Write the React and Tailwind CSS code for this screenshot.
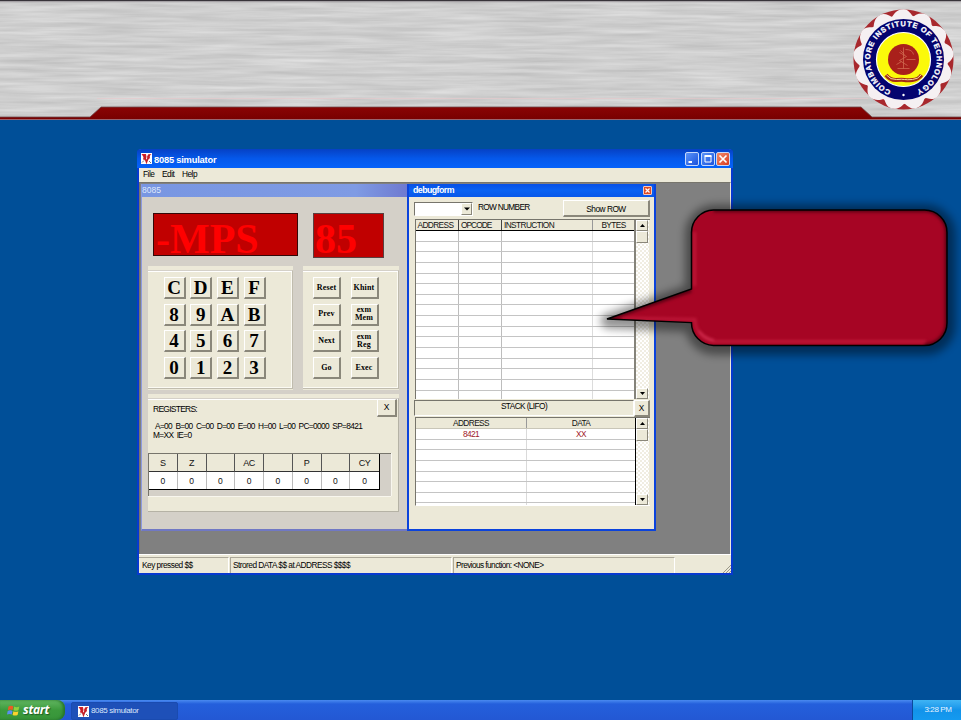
import React from "react";

const raised =
  "bg-[#ece9d8] border border-t-white border-l-white border-r-[#8a877a] border-b-[#8a877a]";

function Seal() {
  const petals = Array.from({ length: 13 }, (_, i) => (i * 360) / 13 - 1);
  return (
    <svg className="absolute left-[852px] top-[8px]" width="103" height="103" viewBox="-51.5 -51.5 103 103">
      <defs>
        <path id="sealArc" d="M -12.5 31 A 33.4 33.4 0 1 1 12.5 31" />
      </defs>
      <circle r="50" fill="#a8282d" />
      {petals.map((a) => (
        <g key={a} transform={`rotate(${a})`}>
          <path d="M-12 -40 C-9 -46 -6 -50.300 1 -50.300 C6 -50 8 -46 12 -40 Z" fill="#f5f0f2" />
        </g>
      ))}
      <circle r="44.5" fill="#f5f0f2" />
      <circle r="40.5" fill="#04046f" />
      <circle r="27" fill="#fbf90a" stroke="#fff" strokeWidth="1.2" />
      <circle cx="0" cy="0" r="15.5" fill="#a9201b" />
      <path
        d="M0 -12 V9 M-4 -7 L3 -3 L-4 1 L4 6 M2 -10 q7 0 8 5 M-6 9 h12 M3 0 h9 M-3 -9 l4 4 M-7 5 l5 -3"
        stroke="#cf6a50"
        strokeWidth="0.8"
        fill="none"
      />
      <path d="M-17.500 15.500 Q-13 21 -7 20.500 T1 20.500 T9 20.500 T18 15.500" stroke="#a22b16" strokeWidth="4" fill="none" />
      <path d="M-17 15.500 Q-13 20.500 -7 20 T1 20 T9 20 T17.500 15.500" stroke="#f3d9a0" strokeWidth="1" fill="none" />
      <text
        fill="#fff"
        stroke="#fff"
        strokeWidth="0.3"
        fontFamily="'Liberation Sans', sans-serif"
        fontWeight="700"
        fontSize="7.4"
      >
        <textPath href="#sealArc" startOffset="0" textLength="183" lengthAdjust="spacing">
          COIMBATORE INSTITUTE OF TECHNOLOGY
        </textPath>
      </text>
      <circle cx="0" cy="35.500" r="1.2" fill="#fff" />
    </svg>
  );
}

function Header() {
  return (
    <header className="relative h-[120px] w-full shrink-0 overflow-hidden">
      <svg className="block" width="961" height="120" viewBox="0 0 961 120">
        <defs>
          <filter id="brushed" x="0" y="0" width="100%" height="100%" colorInterpolationFilters="sRGB">
            <feTurbulence type="fractalNoise" baseFrequency="0.012 0.22" numOctaves="3" seed="7" />
            <feColorMatrix values="0.17 0 0 0 0.725  0.17 0 0 0 0.725  0.17 0 0 0 0.725  0 0 0 0 1" />
          </filter>
          <linearGradient id="redBar" x1="0" y1="0" x2="0" y2="1">
            <stop offset="0" stopColor="#8a0404" />
            <stop offset="1" stopColor="#780000" />
          </linearGradient>
        </defs>
        <rect width="961" height="120" fill="#cfcfcf" />
        <rect width="961" height="120" filter="url(#brushed)" />
        <rect width="961" height="1.300" fill="#38343a" />
        <rect y="1.300" width="961" height="1" fill="#a5a1a5" />
        <path d="M97 98.500 H868" stroke="#e5c9cb" strokeWidth="0.700" />
        <path d="M101 107 H861 L872 117 H961 V119.500 H0 V117 H90 Z" fill="url(#redBar)" />
        <path d="M0 117 H90 L101 107 H861 L872 117 H961" fill="none" stroke="#6d4a4c" strokeWidth="0.800" />
        <path d="M0 119.500 H961" stroke="#97646f" strokeWidth="1" />
      </svg>
      <Seal />
    </header>
  );
}

function AppIcon() {
  return (
    <svg width="11" height="11" viewBox="0 0 11 11" className="shrink-0">
      <rect width="11" height="11" fill="#fff" />
      <path d="M0.500 1 H5 L5.500 4 L4.500 7 L2 6.500 L2.500 4 Z M10.500 1 L7 1.500 L6 4 L7.500 6.500 L9 5 L8.500 3 Z" fill="#d6202a" />
      <path d="M3 2 L5.500 9 L8.500 1.500" fill="none" stroke="#c22028" strokeWidth="1.600" />
      <path d="M1 9.500 L3 7.500 M8 8 L10 10" stroke="#555" strokeWidth="0.800" />
    </svg>
  );
}

function Caption({ kind }) {
  const tone =
    kind === "close"
      ? "bg-linear-to-br from-[#f08a6a] to-[#d8371a]"
      : "bg-linear-to-br from-[#5b93f8] to-[#1c51dc]";
  return (
    <span className={`block h-[14px] w-[14px] rounded-[2px] border border-[#c5d8fb] ${tone}`}>
      <svg width="12" height="12" viewBox="0 0 12 12" fill="none" stroke="#fff">
        {kind === "min" && <path d="M2.500 9 H6" strokeWidth="2" />}
        {kind === "max" && (
          <>
            <path d="M3 3.500 V9 H9 V3" strokeWidth="1" />
            <path d="M2.500 3 H9.500" strokeWidth="2" />
          </>
        )}
        {kind === "close" && <path d="M2.500 2.500 L9.500 9.500 M9.500 2.500 L2.500 9.500" strokeWidth="1.700" />}
      </svg>
    </span>
  );
}

const keys = ["C", "D", "E", "F", "8", "9", "A", "B", "4", "5", "6", "7", "0", "1", "2", "3"];
const fns = [
  ["Reset"], ["Khint"],
  ["Prev"], ["exm", "Mem"],
  ["Next"], ["exm", "Reg"],
  ["Go"], ["Exec"],
];

function KitForm() {
  return (
    <section className="absolute left-px top-px flex h-[347px] w-[268px] flex-col border-b-2 border-l border-[#7078c4] border-l-[#8d9ae0] bg-[#d4d0c8]">
      <div className="h-[13px] shrink-0 bg-linear-to-r from-[#7896e2] from-0% via-[#7f9be4] via-80% to-[#6e78cf] text-[8.5px] leading-[13px] text-[#dfe8fb]">
        8085
      </div>
      <div className="flex h-[69px] shrink-0 items-start pl-[11px] pt-[16px] font-['Liberation_Serif',serif] text-[42px] font-bold text-[#ff0000]">
        <div className="h-[43px] w-[145px] border border-[#330808] bg-[#c00000] pl-[2px] leading-[50px]">-MPS</div>
        <div className="ml-[15px] h-[45px] w-[71px] border border-[#5a4040] bg-[#c00000] pl-[1px] leading-[50px]">85</div>
      </div>
      <div className="flex h-[124px] shrink-0 pl-[6px]">
        <div className="h-[124px] w-[145px] bg-[#ece9d8] pt-[4px]">
          <div className="grid h-[119px] grid-cols-[repeat(4,22px)] grid-rows-[repeat(4,22px)] gap-[4.7px] border-b border-r border-t border-[#c0bcae] border-t-[#d4d0c8] pl-[15.5px] pt-[6px] shadow-[inset_0_1px_0_#fff,inset_-1px_-1px_0_#fbfaf3]">
            {keys.map((k) => (
              <div key={k} className={`${raised} flex items-center justify-center border-b-2 border-r-2 font-['Liberation_Serif',serif] text-[19px] font-bold leading-none text-black`}>
                {k}
              </div>
            ))}
          </div>
        </div>
        <div className="ml-[10px] h-[124px] w-[96px] bg-[#ece9d8] pt-[4px]">
          <div className="grid h-[119px] grid-cols-[repeat(2,28px)] grid-rows-[repeat(4,22px)] gap-x-[9.5px] gap-y-[4.7px] border-b border-r border-t border-[#c0bcae] border-t-[#d4d0c8] pl-[10px] pt-[6px] shadow-[inset_0_1px_0_#fff,inset_-1px_-1px_0_#fbfaf3]">
            {fns.map((f, i) => (
              <div key={i} className={`${raised} flex flex-col items-center justify-center border-b-2 border-r-2 font-['Liberation_Serif',serif] text-[8px] font-bold leading-[8px] tracking-[0.15px] text-black`}>
                {f.map((w) => (
                  <span key={w}>{w}</span>
                ))}
              </div>
            ))}
          </div>
        </div>
      </div>
      <div className="ml-[6px] mt-[4px] h-[118px] w-[251px] shrink-0 bg-[#ece9d8] pt-[4px]">
        <div className="flex h-[114px] flex-col border-b border-r border-t border-[#b5b2a5] border-t-[#d4d0c8] shadow-[inset_0_1px_0_#fff]">
          <div className="flex justify-between">
            <span className="pl-[5px] pt-[5px] text-[8.5px] leading-[10px] tracking-[-0.75px] text-black">REGISTERS:</span>
            <span className={`${raised} mr-px h-[18px] w-[20px] border-b-2 border-r-2 text-center text-[8.5px] leading-[15px] text-black`}>X</span>
          </div>
          <div className="mt-[5px] whitespace-pre pl-[5px] text-[8.3px] leading-[8.5px] text-black">
            <div className="ml-[2px] tracking-[-0.63px]">A=00  B=00  C=00  D=00  E=00  H=00  L=00  PC=0000  SP=8421</div>
            <div className="tracking-[-0.63px]">M=XX  IE=0</div>
          </div>
          <div className="mt-[14px] h-[43px] w-[243px] border-l border-t border-[#77756c] bg-[#d4d0c8] shadow-[0_1px_0_#f8f6ee,1px_0_0_#f8f6ee]">
            <div className="grid h-[36px] w-[231px] grid-cols-8 grid-rows-2 border-b border-r border-black text-center text-[9px] leading-[18px] text-[#111]">
              {["S", "Z", "", "AC", "", "P", "", "CY"].map((h, i) => (
                <div key={i} className={`border-b border-b-[#333] bg-[#ece9d8] tracking-[-0.3px] ${i < 7 ? "border-r border-r-[#555]" : ""}`}>{h}</div>
              ))}
              {Array.from({ length: 8 }, (_, i) => (
                <div key={i} className={`bg-white text-[8.5px] ${i < 7 ? "border-r border-r-[#bbb]" : ""}`}>0</div>
              ))}
            </div>
          </div>
        </div>
      </div>
    </section>
  );
}

function Arrow({ up }) {
  return (
    <span className={`${raised} flex h-[11px] w-[12px] shrink-0 items-center justify-center`}>
      <svg width="5" height="3" viewBox="0 0 5 3">
        <path d={up ? "M0 3 L2.500 0 L5 3 Z" : "M0 0 L2.500 3 L5 0 Z"} fill="#000" />
      </svg>
    </span>
  );
}

function ScrollBar() {
  return (
    <div className="flex w-[13px] shrink-0 flex-col bg-[repeating-conic-gradient(#f0ede2_0_25%,#ffffff_0_50%)] bg-[length:4px_4px]">
      <Arrow up />
      <span className={`${raised} h-[12px] w-[12px]`} />
      <span className="flex-1" />
      <Arrow />
    </div>
  );
}

function DebugForm() {
  return (
    <section className="absolute left-[267px] top-px flex h-[347px] w-[249px] flex-col border-b-[2px] border-l-[2px] border-r-[2px] border-[#0b43dc] bg-[#ece9d8]">
      <div className="flex h-[13px] shrink-0 items-center justify-between bg-linear-to-b from-[#0850e6] via-[#0a62f2] to-[#0858ea] pl-[4px] pr-[2px]">
        <span className="text-[8.8px] font-bold leading-[13px] tracking-[-0.56px] text-white">debugform</span>
        <span className="flex h-[9px] w-[9px] items-center justify-center rounded-[1px] border border-[#f6c8ba] bg-[#dd4a26]">
          <svg width="5" height="5" viewBox="0 0 5 5">
            <path d="M0.500 0.500 L4.500 4.500 M4.500 0.500 L0.500 4.500" stroke="#fff" strokeWidth="1.200" />
          </svg>
        </span>
      </div>
      <div className="flex h-[22px] shrink-0 items-start pl-[5px] pt-[3px] text-[8.5px] text-black">
        <div className="mt-[2px] flex h-[14px] w-[59px] justify-end border border-[#fff] border-l-[#77756c] border-t-[#77756c] bg-white">
          <span className={`${raised} flex h-[12px] w-[11px] items-center justify-center`}>
            <svg width="6" height="4" viewBox="0 0 6 4">
              <path d="M0 0.500 H6 L3 3.500 Z" fill="#000" />
            </svg>
          </span>
        </div>
        <span className="ml-[5px] mt-[2px] w-[85px] text-[8.300px] leading-[10px] tracking-[-0.7px]">ROW NUMBER</span>
        <div className={`${raised} h-[17px] w-[87px] border-b-2 border-r-2 text-center text-[8.3px] leading-[16px] tracking-[-0.5px]`}>Show ROW</div>
      </div>
      <div className="ml-[6px] flex h-[180px] w-[235px] shrink-0 border-l border-t border-[#77756c]">
        <div className="w-[220px] shrink-0 overflow-hidden border-r-2 border-[#85837a] bg-white">
          <div className="grid h-[11px] grid-cols-[43px_43px_91px_1fr] border-b border-black bg-[#ece9d8] text-[8.3px] leading-[10px] tracking-[-0.6px] text-[#111]">
            <span className="border-r border-[#444] pl-[1.500px]">ADDRESS</span>
            <span className="border-r border-[#444] pl-[2px] tracking-[-0.95px]">OPCODE</span>
            <span className="border-r border-[#999] pl-[2px]">INSTRUCTION</span>
            <span className="text-center">BYTES</span>
          </div>
          {Array.from({ length: 16 }, (_, i) => (
            <div key={i} className="grid h-[10.65px] grid-cols-[43px_43px_91px_1fr] border-b border-[#c4c4c4]">
              <span className="border-r border-[#bdbdbd]" />
              <span className="border-r border-[#bdbdbd]" />
              <span className="border-r border-[#dcdcdc]" />
              <span />
            </div>
          ))}
        </div>
        <ScrollBar />
      </div>
      <div className="ml-[5px] mt-px flex h-[17px] w-[236px] shrink-0 text-[8.3px] text-black">
        <div className="h-[16px] flex-1 border border-[#fff] border-l-[#77756c] border-t-[#77756c] text-center leading-[11px] tracking-[-0.6px]">
          STACK (LIFO)
        </div>
        <div className={`${raised} h-[17px] w-[16px] border-b-2 border-r-2 text-center leading-[15px]`}>X</div>
      </div>
      <div className="ml-[6px] flex h-[89px] w-[235px] shrink-0 border-b border-l border-t border-[#77756c] border-b-white">
        <div className="w-[220px] shrink-0 overflow-hidden border-r border-black bg-white text-center text-[8.3px]">
          <div className="grid h-[11px] grid-cols-[111px_1fr] border-b border-[#c9c6b8] bg-[#ece9d8] leading-[10px] tracking-[-0.6px] text-[#111]">
            <span className="border-r border-[#999]">ADDRESS</span>
            <span>DATA</span>
          </div>
          {Array.from({ length: 8 }, (_, i) => (
            <div key={i} className="grid h-[10.65px] grid-cols-[111px_1fr] border-b border-[#c4c4c4] leading-[10px] tracking-[-0.6px] text-[#a02028]">
              <span className="border-r border-[#dadada]">{i === 0 ? "8421" : ""}</span>
              <span>{i === 0 ? "XX" : ""}</span>
            </div>
          ))}
        </div>
        <ScrollBar />
      </div>
    </section>
  );
}

function Simulator() {
  return (
    <main className="ml-[137px] mt-[29px] flex h-[426px] w-[596px] shrink-0 flex-col rounded-t-[4px] border-b-2 border-l-2 border-r-2 border-[#0739cf] bg-[#ece9d8]">
      <div className="-mx-[2px] flex h-[19px] shrink-0 items-center rounded-t-[4px] bg-linear-to-b from-[#0641c4] via-[#0558ea] to-[#0562fa] pl-[4px] pr-[3px]">
        <AppIcon />
        <span className="ml-[2px] mt-[2px] flex-1 text-[9.3px] font-bold leading-[14px] tracking-[-0.2px] text-white">8085 simulator</span>
        <div className="mt-[1px] flex gap-[1.5px]">
          <Caption kind="min" />
          <Caption kind="max" />
          <Caption kind="close" />
        </div>
      </div>
      <nav className="flex h-[14px] shrink-0 bg-[#ece9d8] pl-[4px] text-[8.3px] leading-[13px] tracking-[-0.5px] text-black">
        <span className="w-[19px]">File</span>
        <span className="w-[20px]">Edit</span>
        <span>Help</span>
      </nav>
      <div className="relative h-[372px] shrink-0 overflow-hidden border-l border-r border-t border-[#77756c] border-r-[#ece9d8] bg-[#808080]">
        <KitForm />
        <DebugForm />
      </div>
      <footer className="flex flex-1 items-stretch border-t border-white pt-[2px] text-[8.3px] leading-[14px] text-black">
        <span className="w-[90px] border-r border-t border-[#aca899] border-r-white pl-[3px] tracking-[-0.5px]">Key pressed $$</span>
        <span className="ml-px w-[222px] border-l border-r border-t border-[#aca899] border-r-white pl-[2px] tracking-[-0.53px]">Strored DATA $$ at ADDRESS $$$$</span>
        <span className="ml-[1px] w-[222px] border-l border-r border-t border-[#aca899] border-r-white pl-[2px] tracking-[-0.58px]">Previous function: &lt;NONE&gt;</span>
        <span className="flex flex-1 items-end justify-end">
          <svg width="9" height="9" viewBox="0 0 9 9">
            <path d="M1 9 L9 1 M4 9 L9 4 M7 9 L9 7" stroke="#9b9888" strokeWidth="1" />
          </svg>
        </span>
      </footer>
    </main>
  );
}

const bubble =
  "M713.500 210 H924.500 A22.500 22.500 0 0 1 947 232.500 V323 A22.500 22.500 0 0 1 924.500 345.500 H713.500 A22.500 22.500 0 0 1 691.500 322.600 L607 319 L691.500 289 V232.500 A22.500 22.500 0 0 1 713.500 210 Z";

function Callout() {
  return (
    <svg className="pointer-events-none absolute left-0 top-0" width="961" height="400" viewBox="0 0 961 400">
      <defs>
        <clipPath id="bubbleClip">
          <path d={bubble} />
        </clipPath>
        <filter id="soft" x="-10%" y="-20%" width="120%" height="140%">
          <feGaussianBlur stdDeviation="4" />
        </filter>
        <filter id="edge" x="-10%" y="-20%" width="120%" height="140%" colorInterpolationFilters="sRGB">
          <feGaussianBlur stdDeviation="1.6" />
        </filter>
      </defs>
      <path d={bubble} fill="#000" stroke="#000" strokeWidth="15" strokeLinejoin="round" opacity="0.42" filter="url(#soft)" transform="translate(1 2)" />
      <path d={bubble} fill="#a60524" />
      <g clipPath="url(#bubbleClip)">
        <g filter="url(#edge)" fill="none">
          <path d="M691 290 L607 319 M713.500 210 H924.500 A22.500 22.500 0 0 1 947 232.500 V323 A22.500 22.500 0 0 1 924.500 345.500" stroke="#4d0010" strokeWidth="4.500" opacity="0.85" />
          <path d="M694.500 232 V286 M622 318 L695 319.500 A22 22 0 0 0 714 341.500 H926" stroke="#bd1738" strokeWidth="3" />
          <path d="M699 331 Q704 338 714 340.500" stroke="#d93457" strokeWidth="2" />
        </g>
      </g>
      <path d={bubble} fill="none" stroke="#000" strokeWidth="1.500" />
    </svg>
  );
}

function Taskbar() {
  return (
    <footer className="mt-auto flex h-[20px] shrink-0 items-stretch bg-linear-to-b from-[#4a8af0] from-0% via-[#245fdc] via-20% to-[#2358d4]">
      <div className="flex w-[65px] items-center rounded-r-[8px] bg-linear-to-b from-[#62b762] via-[#3c9a3c] to-[#37943a] pl-[7px] shadow-[inset_-2px_0_3px_#26722a]">
        <svg width="13" height="13" viewBox="0 0 13 13">
          <path d="M1.500 2.500 Q4 1 6.300 2.300 L5.600 6 Q3.500 4.800 0.900 6 Z" fill="#ee5a24" />
          <path d="M7.200 2.600 Q9.800 3.700 12.300 2.500 L11.500 6.200 Q9 7.300 6.500 6.200 Z" fill="#8fd13c" />
          <path d="M0.700 6.900 Q3.400 5.700 5.500 6.900 L4.800 10.500 Q2.600 9.400 0 10.500 Z" fill="#5a8df0" />
          <path d="M6.400 7.200 Q8.900 8.300 11.400 7.200 L10.600 10.900 Q8 12 5.600 10.900 Z" fill="#fbd22e" />
        </svg>
        <span className="ml-[3px] font-['Open_Sans','Liberation_Sans',sans-serif] text-[12px] font-bold italic leading-[18px] tracking-[-0.3px] text-white [text-shadow:1px_1px_1px_#1d5c22]">start</span>
      </div>
      <div className="ml-[6px] mt-[2px] flex h-[18px] w-[107px] items-center rounded-[2px] border border-[#1a4bb0] bg-[#1e50b8] pl-[6px]">
        <AppIcon />
        <span className="ml-[2px] text-[8px] leading-[14px] tracking-[-0.35px] text-[#dbe7fb]">8085 simulator</span>
      </div>
      <div className="ml-auto flex w-[49px] items-center justify-center border-l border-[#0b4a9c] bg-linear-to-b from-[#3fb4f4] via-[#1293ea] to-[#149af0] pl-[2px] text-[8px] tracking-[-0.4px] text-[#e4f3ff]">
        3:28 PM
      </div>
    </footer>
  );
}

export default function App() {
  return (
    <div className="relative flex h-[720px] w-[961px] flex-col overflow-hidden bg-[#004f98] font-['Liberation_Sans',sans-serif]">
      <Header />
      <Simulator />
      <Callout />
      <Taskbar />
    </div>
  );
}
